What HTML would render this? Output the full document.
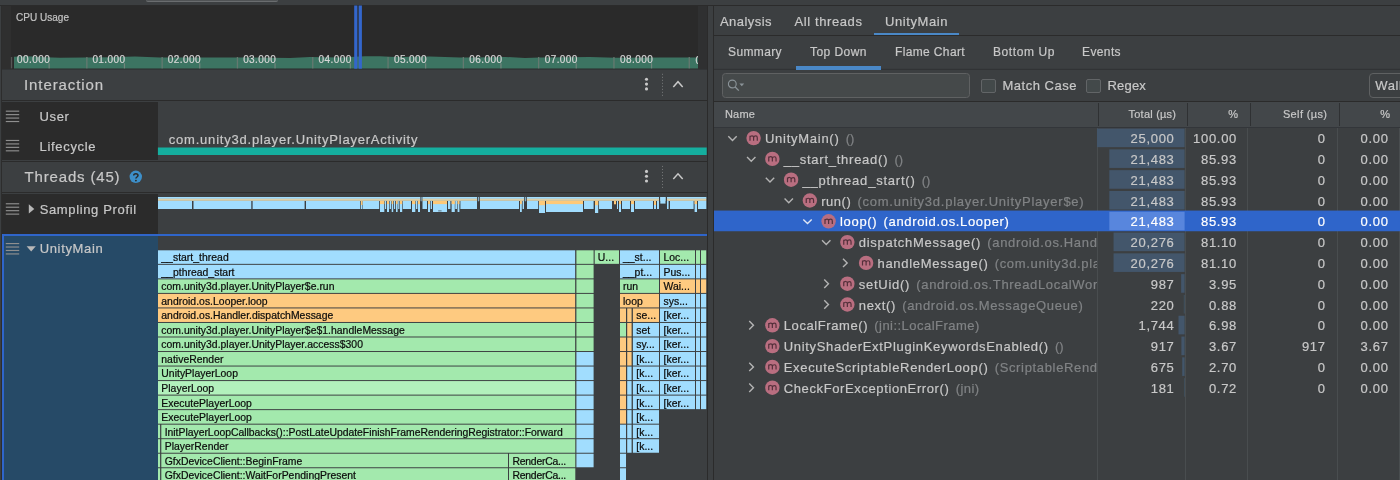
<!DOCTYPE html>
<html lang="en"><head><meta charset="utf-8"><title>CPU Profiler</title>
<style>
html,body{margin:0;padding:0;background:#3c3f41}
body{width:1400px;height:480px;position:relative;overflow:hidden;font-family:"Liberation Sans",sans-serif}
.r{position:absolute;display:block}
.t{position:absolute;white-space:nowrap;display:block;-webkit-text-stroke:0.2px}
svg{overflow:hidden}
#app{position:absolute;left:0;top:0;width:1400px;height:480px;overflow:hidden;will-change:transform}
</style></head><body><div id="app">
<div class="r" style="left:0px;top:0px;width:1400px;height:480px;background:#3c3f41;"></div>
<div class="r" style="left:1px;top:5px;width:1px;height:475px;background:#2d2d2d;"></div>
<div class="r" style="left:0px;top:5px;width:1400px;height:1px;background:#2b2b2b;"></div>
<div class="r" style="left:146px;top:0px;width:132px;height:1px;background:#505355;border-radius:0 0 3px 3px;border-bottom:1px solid #6a6d6f"></div>
<div class="r" style="left:2px;top:6px;width:696px;height:63px;background:#2a2a2a;"></div>
<div class="r" style="left:2px;top:6px;width:9px;height:63px;background:#2f2f2f;"></div>
<div class="r" style="left:698px;top:6px;width:9px;height:63px;background:#2f3031;"></div>
<span class="t" style="left:16.00px;top:10.84px;font-size:10px;line-height:13px;color:#c4c4c4;letter-spacing:0.022px;">CPU Usage</span>
<svg class="r" style="left:0;top:0" width="707" height="70" viewBox="0 0 707 70"><path d="M14,68.5 L14,56.7 L28,56.2 L45,57.2 L60,57.8 L85,57.5 L110,57.2 L135,56.5 L160,57.5 L215,57.6 L240,57.4 L290,57.9 L310,56.9 L340,57.4 L365,56.3 L380,56.2 L395,56.9 L430,56.6 L460,57.4 L470,57.4 L505,56.9 L525,57.9 L540,57.4 L590,56.9 L615,57.7 L660,57.4 L698,57.4 L698,68.5 Z" fill="#3c7462"/><rect x="10.90" y="57" width="1.3" height="11.4" fill="#565656"/><rect x="48.55" y="63.2" width="1.2" height="5.2" fill="#72857d"/><rect x="86.20" y="57" width="1.3" height="11.4" fill="#657970"/><rect x="123.85" y="63.2" width="1.2" height="5.2" fill="#72857d"/><rect x="161.50" y="57" width="1.3" height="11.4" fill="#657970"/><rect x="199.15" y="63.2" width="1.2" height="5.2" fill="#72857d"/><rect x="236.80" y="57" width="1.3" height="11.4" fill="#657970"/><rect x="274.45" y="63.2" width="1.2" height="5.2" fill="#72857d"/><rect x="312.10" y="57" width="1.3" height="11.4" fill="#657970"/><rect x="349.75" y="63.2" width="1.2" height="5.2" fill="#72857d"/><rect x="387.40" y="57" width="1.3" height="11.4" fill="#657970"/><rect x="425.05" y="63.2" width="1.2" height="5.2" fill="#72857d"/><rect x="462.70" y="57" width="1.3" height="11.4" fill="#657970"/><rect x="500.35" y="63.2" width="1.2" height="5.2" fill="#72857d"/><rect x="538.00" y="57" width="1.3" height="11.4" fill="#657970"/><rect x="575.65" y="63.2" width="1.2" height="5.2" fill="#72857d"/><rect x="613.30" y="57" width="1.3" height="11.4" fill="#657970"/><rect x="650.95" y="63.2" width="1.2" height="5.2" fill="#72857d"/><rect x="688.60" y="57" width="1.3" height="11.4" fill="#657970"/><rect x="354.2" y="5.5" width="2.9" height="63.2" fill="#3366cc"/><rect x="357.1" y="5.5" width="1.8" height="63.2" fill="#3366cc" fill-opacity="0.33"/><rect x="358.9" y="5.5" width="3.0" height="63.2" fill="#3366cc"/></svg>
<span class="t" style="left:17.00px;top:53.33px;font-size:10px;line-height:13px;color:#d6d6d6;letter-spacing:0.436px;">00.000</span>
<span class="t" style="left:92.38px;top:53.33px;font-size:10px;line-height:13px;color:#d6d6d6;letter-spacing:0.436px;">01.000</span>
<span class="t" style="left:167.76px;top:53.33px;font-size:10px;line-height:13px;color:#d6d6d6;letter-spacing:0.436px;">02.000</span>
<span class="t" style="left:243.14px;top:53.33px;font-size:10px;line-height:13px;color:#d6d6d6;letter-spacing:0.436px;">03.000</span>
<span class="t" style="left:318.52px;top:53.33px;font-size:10px;line-height:13px;color:#d6d6d6;letter-spacing:0.436px;">04.000</span>
<span class="t" style="left:393.90px;top:53.33px;font-size:10px;line-height:13px;color:#d6d6d6;letter-spacing:0.436px;">05.000</span>
<span class="t" style="left:469.28px;top:53.33px;font-size:10px;line-height:13px;color:#d6d6d6;letter-spacing:0.436px;">06.000</span>
<span class="t" style="left:544.66px;top:53.33px;font-size:10px;line-height:13px;color:#d6d6d6;letter-spacing:0.436px;">07.000</span>
<span class="t" style="left:620.04px;top:53.33px;font-size:10px;line-height:13px;color:#d6d6d6;letter-spacing:0.436px;">08.000</span>
<div class="r" style="left:695.4px;top:50px;width:2.6px;height:18px;overflow:hidden"><span class="t" style="left:0.00px;top:3.63px;font-size:10px;line-height:13px;color:#d6d6d6;letter-spacing:0.436px;">09.000</span></div>
<div class="r" style="left:707px;top:6px;width:1px;height:474px;background:#2b2b2b;"></div>
<div class="r" style="left:713px;top:6px;width:1px;height:474px;background:#2b2b2b;"></div>
<div class="r" style="left:2px;top:69px;width:705px;height:1px;background:#323537;"></div>
<span class="t" style="left:24.00px;top:75.10px;font-size:15px;line-height:20px;color:#c8c8c8;letter-spacing:0.905px;">Interaction</span>
<div class="r" style="left:2px;top:100px;width:705px;height:1px;background:#2b2b2b;"></div>
<svg class="r" style="left:0;top:0" width="707" height="200" viewBox="0 0 707 200"><circle cx="646.5" cy="79.3" r="1.55" fill="#c9c9c9"/><circle cx="646.5" cy="84.1" r="1.55" fill="#c9c9c9"/><circle cx="646.5" cy="88.9" r="1.55" fill="#c9c9c9"/><rect x="662" y="73.8" width="1" height="1" fill="#77797b"/><rect x="662" y="76.8" width="1" height="1" fill="#77797b"/><rect x="662" y="79.8" width="1" height="1" fill="#77797b"/><rect x="662" y="82.8" width="1" height="1" fill="#77797b"/><rect x="662" y="85.8" width="1" height="1" fill="#77797b"/><rect x="662" y="88.8" width="1" height="1" fill="#77797b"/><rect x="662" y="91.8" width="1" height="1" fill="#77797b"/><rect x="662" y="94.8" width="1" height="1" fill="#77797b"/><path d="M673.3,86.9 L678,81.7 L682.7,86.9" fill="none" stroke="#c9c9c9" stroke-width="1.5"/><circle cx="646.5" cy="171.4" r="1.55" fill="#c9c9c9"/><circle cx="646.5" cy="176.2" r="1.55" fill="#c9c9c9"/><circle cx="646.5" cy="181.0" r="1.55" fill="#c9c9c9"/><rect x="662" y="165.9" width="1" height="1" fill="#77797b"/><rect x="662" y="168.9" width="1" height="1" fill="#77797b"/><rect x="662" y="171.9" width="1" height="1" fill="#77797b"/><rect x="662" y="174.9" width="1" height="1" fill="#77797b"/><rect x="662" y="177.9" width="1" height="1" fill="#77797b"/><rect x="662" y="180.9" width="1" height="1" fill="#77797b"/><rect x="662" y="183.9" width="1" height="1" fill="#77797b"/><rect x="662" y="186.9" width="1" height="1" fill="#77797b"/><path d="M673.3,179.0 L678,173.8 L682.7,179.0" fill="none" stroke="#c9c9c9" stroke-width="1.5"/></svg>
<div class="r" style="left:2px;top:102px;width:156px;height:58px;background:#2b2b2b;"></div>
<span class="t" style="left:39.60px;top:108.40px;font-size:13px;line-height:17px;color:#c8c8c8;letter-spacing:0.588px;">User</span>
<span class="t" style="left:39.60px;top:137.80px;font-size:13px;line-height:17px;color:#c8c8c8;letter-spacing:0.669px;">Lifecycle</span>
<span class="t" style="left:168.80px;top:131.20px;font-size:13px;line-height:17px;color:#c8c8c8;letter-spacing:0.785px;">com.unity3d.player.UnityPlayerActivity</span>
<svg class="r" style="left:0;top:140px" width="707" height="20" viewBox="0 140 707 20"><rect x="157.9" y="147.5" width="548.8" height="7.5" fill="#15af9f"/></svg>
<div class="r" style="left:2px;top:161px;width:705px;height:1px;background:#2b2b2b;"></div>
<span class="t" style="left:24.60px;top:167.30px;font-size:15px;line-height:20px;color:#c8c8c8;letter-spacing:0.827px;">Threads (45)</span>
<svg class="r" style="left:129px;top:170px" width="14" height="14" viewBox="0 0 14 14"><circle cx="6.8" cy="6.8" r="6.2" fill="#3d8fc9"/><path d="M4.7,5.4 C4.7,3.2 9,3.2 9,5.5 C9,7 6.9,7 6.9,8.6" fill="none" stroke="#2b2b2b" stroke-width="1.5"/><circle cx="6.9" cy="10.6" r="0.95" fill="#2b2b2b"/></svg>
<div class="r" style="left:2px;top:192px;width:705px;height:1px;background:#2b2b2b;"></div>
<div class="r" style="left:2px;top:194px;width:156px;height:40px;background:#2b2b2b;"></div>
<span class="t" style="left:39.70px;top:200.50px;font-size:13px;line-height:17px;color:#c8c8c8;letter-spacing:0.638px;">Sampling Profil</span>
<svg class="r" style="left:0;top:0" width="707" height="220" viewBox="0 0 707 220"><rect x="158.0" y="197" width="262.2" height="1.9" fill="#a1ddfe"/><rect x="158.0" y="198.7" width="262.2" height="2.2" fill="#ddd0a8"/><rect x="422.4" y="197" width="54.6" height="1.9" fill="#a1ddfe"/><rect x="422.4" y="198.7" width="54.6" height="2.2" fill="#ddd0a8"/><rect x="479.8" y="197" width="44.3" height="1.9" fill="#a1ddfe"/><rect x="479.8" y="198.7" width="44.3" height="2.2" fill="#ddd0a8"/><rect x="526.8" y="197" width="132.2" height="1.9" fill="#a1ddfe"/><rect x="526.8" y="198.7" width="132.2" height="2.2" fill="#ddd0a8"/><rect x="660.3" y="197" width="5.2" height="1.9" fill="#a1ddfe"/><rect x="660.3" y="198.7" width="5.2" height="2.2" fill="#ddd0a8"/><rect x="667.0" y="197" width="39.3" height="1.9" fill="#a1ddfe"/><rect x="667.0" y="198.7" width="39.3" height="2.2" fill="#ddd0a8"/><rect x="158" y="200.85" width="34.0" height="8.15" fill="#a1ddfe"/><rect x="193.5" y="200.85" width="57.8" height="8.15" fill="#a1ddfe"/><rect x="252.6" y="200.85" width="52.0" height="8.15" fill="#a1ddfe"/><rect x="306" y="200.85" width="54.3" height="8.15" fill="#a1ddfe"/><rect x="361" y="200.85" width="1.5" height="8.15" fill="#a1ddfe"/><rect x="361" y="200.7" width="1.5" height="4.3" fill="#fec978"/><rect x="363" y="200.85" width="16.2" height="8.15" fill="#a1ddfe"/><rect x="380" y="200.85" width="4.3" height="11.15" fill="#a1ddfe"/><rect x="380" y="200.7" width="4.3" height="3.4" fill="#fec978"/><rect x="385" y="200.85" width="1.2" height="8.15" fill="#a1ddfe"/><rect x="387" y="200.85" width="2.0" height="11.15" fill="#a1ddfe"/><rect x="387" y="200.7" width="2.0" height="3.4" fill="#fec978"/><rect x="389.6" y="200.85" width="1.4" height="8.15" fill="#a1ddfe"/><rect x="391.7" y="200.85" width="1.5" height="11.15" fill="#a1ddfe"/><rect x="391.7" y="200.7" width="1.5" height="3.4" fill="#fec978"/><rect x="394" y="200.85" width="1.2" height="8.15" fill="#a1ddfe"/><rect x="396" y="200.85" width="1.6" height="11.15" fill="#a1ddfe"/><rect x="396" y="200.7" width="1.6" height="3.4" fill="#fec978"/><rect x="398.2" y="200.85" width="1.2" height="8.15" fill="#a1ddfe"/><rect x="400" y="200.85" width="2.2" height="11.15" fill="#a1ddfe"/><rect x="400" y="200.7" width="2.2" height="3.4" fill="#fec978"/><rect x="402.8" y="200.85" width="8.2" height="8.15" fill="#a1ddfe"/><rect x="412" y="200.85" width="3.3" height="11.15" fill="#a1ddfe"/><rect x="412" y="200.7" width="3.3" height="3.4" fill="#fec978"/><rect x="416" y="200.85" width="1.4" height="8.15" fill="#a1ddfe"/><rect x="418" y="200.85" width="2.0" height="11.15" fill="#a1ddfe"/><rect x="418" y="200.7" width="2.0" height="3.4" fill="#fec978"/><rect x="420.8" y="197" width="0.7" height="4.3" fill="#a1ddfe"/><rect x="422.5" y="200.85" width="4.5" height="8.15" fill="#a1ddfe"/><rect x="428" y="200.85" width="2.0" height="11.15" fill="#a1ddfe"/><rect x="428" y="200.7" width="2.0" height="3.4" fill="#fec978"/><rect x="430.6" y="200.85" width="1.4" height="8.15" fill="#a1ddfe"/><rect x="433" y="200.85" width="14.0" height="11.15" fill="#a1ddfe"/><rect x="433" y="200.7" width="14.0" height="3.4" fill="#fec978"/><rect x="448" y="200.85" width="2.4" height="8.15" fill="#a1ddfe"/><rect x="451.6" y="200.85" width="3.2" height="11.15" fill="#a1ddfe"/><rect x="451.6" y="200.7" width="3.2" height="3.4" fill="#fec978"/><rect x="455.3" y="200.85" width="1.7" height="8.15" fill="#a1ddfe"/><rect x="457.6" y="200.85" width="1.8" height="11.15" fill="#a1ddfe"/><rect x="457.6" y="200.7" width="1.8" height="3.4" fill="#fec978"/><rect x="460.4" y="200.85" width="16.6" height="8.15" fill="#a1ddfe"/><rect x="477.9" y="197" width="0.8" height="4.3" fill="#a1ddfe"/><rect x="480" y="200.85" width="39.0" height="8.15" fill="#a1ddfe"/><rect x="520" y="200.85" width="1.8" height="11.15" fill="#a1ddfe"/><rect x="520" y="200.7" width="1.8" height="3.4" fill="#fec978"/><rect x="522.6" y="200.85" width="1.4" height="8.15" fill="#a1ddfe"/><rect x="524.9" y="197" width="0.8" height="4.3" fill="#a1ddfe"/><rect x="527" y="200.85" width="11.2" height="8.15" fill="#a1ddfe"/><rect x="539" y="200.85" width="6.0" height="12.15" fill="#a1ddfe"/><rect x="539" y="200.7" width="6.0" height="4.5" fill="#fec978"/><rect x="546" y="200.85" width="37.0" height="11.15" fill="#a1ddfe"/><rect x="546" y="200.7" width="37.0" height="3.4" fill="#fec978"/><rect x="584" y="200.85" width="9.6" height="8.15" fill="#a1ddfe"/><rect x="595" y="200.85" width="3.2" height="12.15" fill="#a1ddfe"/><rect x="595" y="200.7" width="3.2" height="4.5" fill="#fec978"/><rect x="599" y="200.85" width="13.0" height="8.15" fill="#a1ddfe"/><rect x="614" y="200.7" width="2.0" height="3.6" fill="#fec978"/><rect x="617" y="200.85" width="1.0" height="8.15" fill="#a1ddfe"/><rect x="619" y="200.85" width="2.0" height="11.15" fill="#a1ddfe"/><rect x="619" y="200.7" width="2.0" height="3.4" fill="#fec978"/><rect x="622" y="200.85" width="8.0" height="8.15" fill="#a1ddfe"/><rect x="631" y="200.85" width="3.0" height="11.15" fill="#a1ddfe"/><rect x="631" y="200.7" width="3.0" height="3.4" fill="#fec978"/><rect x="635" y="200.85" width="18.0" height="8.15" fill="#a1ddfe"/><rect x="654" y="200.85" width="2.0" height="8.15" fill="#a1ddfe"/><rect x="654" y="200.7" width="2.0" height="4.3" fill="#fec978"/><rect x="657" y="200.85" width="2.0" height="8.15" fill="#a1ddfe"/><rect x="660.3" y="197" width="5.2" height="6.6" fill="#a1ddfe"/><rect x="667" y="200.85" width="1.6" height="8.15" fill="#a1ddfe"/><rect x="670" y="200.85" width="23.6" height="8.15" fill="#a1ddfe"/><rect x="694.6" y="200.85" width="2.4" height="11.15" fill="#a1ddfe"/><rect x="694.6" y="200.7" width="2.4" height="3.4" fill="#fec978"/><rect x="698" y="200.85" width="8.3" height="8.15" fill="#a1ddfe"/><rect x="438.2" y="210.2" width="3.4" height="1.3" fill="#6f8a99"/></svg>
<div class="r" style="left:2px;top:234px;width:705px;height:2px;background:#2f65ca;"></div>
<div class="r" style="left:2px;top:236px;width:2px;height:244px;background:#2f65ca;"></div>
<div class="r" style="left:4px;top:236px;width:154px;height:244px;background:#264a67;"></div>
<span class="t" style="left:39.70px;top:240.20px;font-size:13px;line-height:17px;color:#c8c8c8;letter-spacing:0.645px;">UnityMain</span>
<svg class="r" style="left:0;top:0" width="160" height="480" viewBox="0 0 160 480"><rect x="5.8" y="110.60" width="13.4" height="1.15" fill="#8f8f8f"/><rect x="5.8" y="114.05" width="13.4" height="1.15" fill="#8f8f8f"/><rect x="5.8" y="117.50" width="13.4" height="1.15" fill="#8f8f8f"/><rect x="5.8" y="120.95" width="13.4" height="1.15" fill="#8f8f8f"/><rect x="5.8" y="139.90" width="13.4" height="1.15" fill="#8f8f8f"/><rect x="5.8" y="143.35" width="13.4" height="1.15" fill="#8f8f8f"/><rect x="5.8" y="146.80" width="13.4" height="1.15" fill="#8f8f8f"/><rect x="5.8" y="150.25" width="13.4" height="1.15" fill="#8f8f8f"/><rect x="5.8" y="203.20" width="13.4" height="1.15" fill="#8f8f8f"/><rect x="5.8" y="206.65" width="13.4" height="1.15" fill="#8f8f8f"/><rect x="5.8" y="210.10" width="13.4" height="1.15" fill="#8f8f8f"/><rect x="5.8" y="213.55" width="13.4" height="1.15" fill="#8f8f8f"/><rect x="5.8" y="243.00" width="13.4" height="1.15" fill="#8f8f8f"/><rect x="5.8" y="246.45" width="13.4" height="1.15" fill="#8f8f8f"/><rect x="5.8" y="249.90" width="13.4" height="1.15" fill="#8f8f8f"/><rect x="5.8" y="253.35" width="13.4" height="1.15" fill="#8f8f8f"/><path d="M28.8,204.2 L34.3,208.9 L28.8,213.6 Z" fill="#b8b8b8"/><path d="M26.6,246.3 L35.8,246.3 L31.2,251.4 Z" fill="#b8b8b8"/></svg>
<svg class="r" style="left:0;top:0" width="707" height="480" viewBox="0 0 707 480"><rect x="158" y="250.30" width="417.15" height="13.55" fill="#a1ddfe"/><rect x="158" y="264.83" width="417.15" height="13.55" fill="#a1ddfe"/><rect x="158" y="279.36" width="417.15" height="13.55" fill="#a3e9ad"/><rect x="158" y="293.89" width="417.15" height="13.55" fill="#feca80"/><rect x="158" y="308.42" width="417.15" height="13.55" fill="#feca80"/><rect x="158" y="322.95" width="417.15" height="13.55" fill="#a3e9ad"/><rect x="158" y="337.48" width="417.15" height="13.55" fill="#a3e9ad"/><rect x="158" y="352.01" width="417.15" height="13.55" fill="#a3e9ad"/><rect x="158" y="366.54" width="417.15" height="13.55" fill="#a3e9ad"/><rect x="158" y="381.07" width="417.15" height="13.55" fill="#b2f1bc"/><rect x="158" y="395.60" width="417.15" height="13.55" fill="#a3e9ad"/><rect x="158" y="410.13" width="417.15" height="13.55" fill="#a3e9ad"/><rect x="158" y="424.66" width="2.10" height="13.55" fill="#a3e9ad"/><rect x="158" y="439.19" width="2.10" height="13.55" fill="#a3e9ad"/><rect x="158" y="453.72" width="2.10" height="13.55" fill="#a3e9ad"/><rect x="158" y="468.25" width="2.10" height="13.55" fill="#a3e9ad"/><rect x="161.3" y="424.66" width="414.00" height="13.55" fill="#a3e9ad"/><rect x="161.3" y="439.19" width="414.00" height="13.55" fill="#a3e9ad"/><rect x="161.3" y="453.72" width="346.70" height="13.55" fill="#a3e9ad"/><rect x="509" y="453.72" width="66.30" height="13.55" fill="#a3e9ad"/><rect x="161.3" y="468.25" width="346.70" height="13.55" fill="#a3e9ad"/><rect x="509" y="468.25" width="66.30" height="13.55" fill="#a3e9ad"/><rect x="576.4" y="250.30" width="17.20" height="13.55" fill="#a3e9ad"/><rect x="576.4" y="264.83" width="17.20" height="13.55" fill="#a3e9ad"/><rect x="576.4" y="279.36" width="17.20" height="13.55" fill="#a3e9ad"/><rect x="576.4" y="293.89" width="17.20" height="13.55" fill="#a3e9ad"/><rect x="576.4" y="308.42" width="17.20" height="13.55" fill="#a3e9ad"/><rect x="576.4" y="322.95" width="17.20" height="13.55" fill="#a3e9ad"/><rect x="576.4" y="337.48" width="17.20" height="13.55" fill="#a3e9ad"/><rect x="576.4" y="352.01" width="17.20" height="13.55" fill="#a1ddfe"/><rect x="576.4" y="366.54" width="17.20" height="13.55" fill="#a1ddfe"/><rect x="576.4" y="381.07" width="17.20" height="13.55" fill="#a1ddfe"/><rect x="576.4" y="395.60" width="17.20" height="13.55" fill="#a1ddfe"/><rect x="576.4" y="410.13" width="17.20" height="13.55" fill="#a1ddfe"/><rect x="576.4" y="424.66" width="17.20" height="13.55" fill="#a1ddfe"/><rect x="576.4" y="439.19" width="17.20" height="13.55" fill="#a1ddfe"/><rect x="576.4" y="453.72" width="17.20" height="13.55" fill="#a1ddfe"/><rect x="594.7" y="250.30" width="24.30" height="13.55" fill="#a3e9ad"/><rect x="620" y="250.30" width="39.00" height="13.55" fill="#a1ddfe"/><rect x="620" y="264.83" width="39.00" height="13.55" fill="#a1ddfe"/><rect x="620" y="279.36" width="39.00" height="13.55" fill="#a3e9ad"/><rect x="620" y="293.89" width="39.00" height="13.55" fill="#feca80"/><rect x="620" y="308.42" width="6.00" height="13.55" fill="#feca80"/><rect x="620" y="322.95" width="6.00" height="13.55" fill="#a3e9ad"/><rect x="620" y="337.48" width="6.00" height="13.55" fill="#feca80"/><rect x="620" y="352.01" width="6.00" height="13.55" fill="#feca80"/><rect x="620" y="366.54" width="6.00" height="13.55" fill="#feca80"/><rect x="620" y="381.07" width="6.00" height="13.55" fill="#feca80"/><rect x="620" y="395.60" width="6.00" height="13.55" fill="#feca80"/><rect x="620" y="410.13" width="6.00" height="13.55" fill="#feca80"/><rect x="620" y="424.66" width="6.00" height="13.55" fill="#a1ddfe"/><rect x="620" y="439.19" width="6.00" height="13.55" fill="#a1ddfe"/><rect x="620" y="453.72" width="6.00" height="13.55" fill="#a1ddfe"/><rect x="620" y="468.25" width="6.00" height="13.55" fill="#a1ddfe"/><rect x="627.2" y="308.42" width="4.40" height="13.55" fill="#feca80"/><rect x="627.2" y="322.95" width="4.40" height="13.55" fill="#feca80"/><rect x="627.2" y="337.48" width="4.40" height="13.55" fill="#feca80"/><rect x="627.2" y="352.01" width="4.40" height="13.55" fill="#feca80"/><rect x="627.2" y="366.54" width="4.40" height="13.55" fill="#a1ddfe"/><rect x="627.2" y="381.07" width="4.40" height="13.55" fill="#a1ddfe"/><rect x="627.2" y="395.60" width="4.40" height="13.55" fill="#a1ddfe"/><rect x="627.2" y="410.13" width="4.40" height="13.55" fill="#a1ddfe"/><rect x="627.2" y="424.66" width="4.40" height="13.55" fill="#a1ddfe"/><rect x="627.2" y="439.19" width="4.40" height="13.55" fill="#a1ddfe"/><rect x="632.9" y="308.42" width="26.10" height="13.55" fill="#feca80"/><rect x="632.9" y="322.95" width="26.10" height="13.55" fill="#a1ddfe"/><rect x="632.9" y="337.48" width="26.10" height="13.55" fill="#a1ddfe"/><rect x="632.9" y="352.01" width="26.10" height="13.55" fill="#a1ddfe"/><rect x="632.9" y="366.54" width="26.10" height="13.55" fill="#a1ddfe"/><rect x="632.9" y="381.07" width="26.10" height="13.55" fill="#a1ddfe"/><rect x="632.9" y="395.60" width="26.10" height="13.55" fill="#a1ddfe"/><rect x="632.9" y="410.13" width="26.10" height="13.55" fill="#a1ddfe"/><rect x="632.9" y="424.66" width="26.10" height="13.55" fill="#a1ddfe"/><rect x="632.9" y="439.19" width="26.10" height="13.55" fill="#a1ddfe"/><rect x="660" y="250.30" width="35.00" height="13.55" fill="#a3e9ad"/><rect x="696" y="250.30" width="4.00" height="13.55" fill="#a3e9ad"/><rect x="701" y="250.30" width="5.20" height="13.55" fill="#a3e9ad"/><rect x="660" y="264.83" width="35.00" height="13.55" fill="#a1ddfe"/><rect x="696" y="264.83" width="4.00" height="13.55" fill="#a1ddfe"/><rect x="701" y="264.83" width="5.20" height="13.55" fill="#a1ddfe"/><rect x="660" y="279.36" width="35.00" height="13.55" fill="#feca80"/><rect x="696" y="279.36" width="4.00" height="13.55" fill="#feca80"/><rect x="701" y="279.36" width="5.20" height="13.55" fill="#feca80"/><rect x="660" y="293.89" width="35.00" height="13.55" fill="#a1ddfe"/><rect x="696" y="293.89" width="4.00" height="13.55" fill="#a1ddfe"/><rect x="701" y="293.89" width="5.20" height="13.55" fill="#a1ddfe"/><rect x="660" y="308.42" width="35.00" height="13.55" fill="#a1ddfe"/><rect x="696" y="308.42" width="4.00" height="13.55" fill="#a1ddfe"/><rect x="701" y="308.42" width="5.20" height="13.55" fill="#a1ddfe"/><rect x="660" y="322.95" width="35.00" height="13.55" fill="#a1ddfe"/><rect x="696" y="322.95" width="4.00" height="13.55" fill="#a1ddfe"/><rect x="701" y="322.95" width="5.20" height="13.55" fill="#a1ddfe"/><rect x="660" y="337.48" width="35.00" height="13.55" fill="#a1ddfe"/><rect x="696" y="337.48" width="4.00" height="13.55" fill="#a1ddfe"/><rect x="701" y="337.48" width="5.20" height="13.55" fill="#a1ddfe"/><rect x="660" y="352.01" width="35.00" height="13.55" fill="#a1ddfe"/><rect x="696" y="352.01" width="4.00" height="13.55" fill="#a1ddfe"/><rect x="701" y="352.01" width="5.20" height="13.55" fill="#a1ddfe"/><rect x="660" y="366.54" width="35.00" height="13.55" fill="#a1ddfe"/><rect x="696" y="366.54" width="4.00" height="13.55" fill="#a1ddfe"/><rect x="701" y="366.54" width="5.20" height="13.55" fill="#a1ddfe"/><rect x="660" y="381.07" width="35.00" height="13.55" fill="#a1ddfe"/><rect x="696" y="381.07" width="4.00" height="13.55" fill="#a1ddfe"/><rect x="701" y="381.07" width="5.20" height="13.55" fill="#a1ddfe"/><rect x="660" y="395.60" width="35.00" height="13.55" fill="#a1ddfe"/><rect x="696" y="395.60" width="4.00" height="13.55" fill="#a1ddfe"/><rect x="701" y="395.60" width="5.20" height="13.55" fill="#a1ddfe"/><g font-family="Liberation Sans, sans-serif" font-size="10.4" fill="#0c0c0c" stroke="#0c0c0c" stroke-width="0.22"><text x="161.3" y="261.20" letter-spacing="0.030">__start_thread</text><text x="161.3" y="275.73" letter-spacing="0.030">__pthread_start</text><text x="161.3" y="290.26" letter-spacing="0.030">com.unity3d.player.UnityPlayer$e.run</text><text x="161.3" y="304.79" letter-spacing="0.030">android.os.Looper.loop</text><text x="161.3" y="319.32" letter-spacing="0.030">android.os.Handler.dispatchMessage</text><text x="161.3" y="333.85" letter-spacing="0.030">com.unity3d.player.UnityPlayer$e$1.handleMessage</text><text x="161.3" y="348.38" letter-spacing="0.030">com.unity3d.player.UnityPlayer.access$300</text><text x="161.3" y="362.91" letter-spacing="0.030">nativeRender</text><text x="161.3" y="377.44" letter-spacing="0.030">UnityPlayerLoop</text><text x="161.3" y="391.97" letter-spacing="0.030">PlayerLoop</text><text x="161.3" y="406.50" letter-spacing="0.030">ExecutePlayerLoop</text><text x="161.3" y="421.03" letter-spacing="0.030">ExecutePlayerLoop</text><text x="164.7" y="435.56" letter-spacing="-0.013">InitPlayerLoopCallbacks()::PostLateUpdateFinishFrameRenderingRegistrator::Forward</text><text x="164.7" y="450.09" letter-spacing="0.030">PlayerRender</text><text x="164.7" y="464.62" letter-spacing="0.030">GfxDeviceClient::BeginFrame</text><text x="512.5" y="464.62" letter-spacing="-0.233">RenderCa...</text><text x="164.7" y="479.15" letter-spacing="0.030">GfxDeviceClient::WaitForPendingPresent</text><text x="512.5" y="479.15" letter-spacing="-0.233">RenderCa...</text><text x="597.8" y="261.20" letter-spacing="0.030">U...</text><text x="623" y="261.20" letter-spacing="0.030">__st...</text><text x="623" y="275.73" letter-spacing="0.030">__pt...</text><text x="623" y="290.26" letter-spacing="0.030">run</text><text x="623" y="304.79" letter-spacing="0.030">loop</text><text x="636.3" y="319.32" letter-spacing="0.030">se...</text><text x="636.3" y="333.85" letter-spacing="0.030">set</text><text x="636.3" y="348.38" letter-spacing="0.030">sy...</text><text x="636.3" y="362.91" letter-spacing="0.030">[k...</text><text x="636.3" y="377.44" letter-spacing="0.030">[k...</text><text x="636.3" y="391.97" letter-spacing="0.030">[k...</text><text x="636.3" y="406.50" letter-spacing="0.030">[k...</text><text x="636.3" y="421.03" letter-spacing="0.030">[k...</text><text x="636.3" y="435.56" letter-spacing="0.030">[k...</text><text x="636.3" y="450.09" letter-spacing="0.030">[k...</text><text x="663.5" y="261.20" letter-spacing="0.030">Loc...</text><text x="663.5" y="275.73" letter-spacing="0.030">Pus...</text><text x="663.5" y="290.26" letter-spacing="0.030">Wai...</text><text x="663.5" y="304.79" letter-spacing="0.030">sys...</text><text x="663.5" y="319.32" letter-spacing="0.030">[ker...</text><text x="663.5" y="333.85" letter-spacing="0.030">[ker...</text><text x="663.5" y="348.38" letter-spacing="0.030">[ker...</text><text x="663.5" y="362.91" letter-spacing="0.030">[ker...</text><text x="663.5" y="377.44" letter-spacing="0.030">[ker...</text><text x="663.5" y="391.97" letter-spacing="0.030">[ker...</text><text x="663.5" y="406.50" letter-spacing="0.030">[ker...</text></g></svg>
<div class="r" style="left:714px;top:35px;width:686px;height:1px;background:#2b2b2b;"></div>
<span class="t" style="left:720.00px;top:12.60px;font-size:13px;line-height:17px;color:#c8c8c8;letter-spacing:0.449px;">Analysis</span>
<span class="t" style="left:794.50px;top:12.60px;font-size:13px;line-height:17px;color:#c8c8c8;letter-spacing:0.598px;">All threads</span>
<span class="t" style="left:885.00px;top:12.60px;font-size:13px;line-height:17px;color:#c8c8c8;letter-spacing:0.578px;">UnityMain</span>
<div class="r" style="left:874px;top:33px;width:85px;height:2.4px;background:#4a88c7;"></div>
<span class="t" style="left:728.00px;top:43.64px;font-size:12px;line-height:16px;color:#c8c8c8;letter-spacing:0.380px;">Summary</span>
<span class="t" style="left:810.00px;top:43.64px;font-size:12px;line-height:16px;color:#c8c8c8;letter-spacing:0.455px;">Top Down</span>
<span class="t" style="left:895.00px;top:43.64px;font-size:12px;line-height:16px;color:#c8c8c8;letter-spacing:0.362px;">Flame Chart</span>
<span class="t" style="left:993.00px;top:43.64px;font-size:12px;line-height:16px;color:#c8c8c8;letter-spacing:0.590px;">Bottom Up</span>
<span class="t" style="left:1082.00px;top:43.64px;font-size:12px;line-height:16px;color:#c8c8c8;letter-spacing:0.386px;">Events</span>
<div class="r" style="left:714px;top:68px;width:686px;height:1px;background:#393c3e;"></div>
<div class="r" style="left:714px;top:69px;width:686px;height:1px;background:#313335;"></div>
<div class="r" style="left:796px;top:66px;width:85px;height:4px;background:#4a88c7;"></div>
<div class="r" style="left:721.5px;top:73px;width:246px;height:23px;border:1px solid #5f6162;border-radius:3.5px;background:#45494a"></div>
<svg class="r" style="left:724px;top:76px" width="24" height="18" viewBox="0 0 24 18"><circle cx="8.3" cy="8" r="3.9" fill="none" stroke="#8b9499" stroke-width="1.1"/><path d="M11.2,11 L14.8,14.6" stroke="#8b9499" stroke-width="1.3" fill="none"/><path d="M15.4,7.5 L20.2,7.5 L17.8,10.3 Z" fill="#8b9499"/></svg>
<div class="r" style="left:981px;top:78.5px;width:12.5px;height:12.5px;border:1px solid #626567;border-radius:2px;background:#43494a"></div>
<div class="r" style="left:1086px;top:78.5px;width:12.5px;height:12.5px;border:1px solid #626567;border-radius:2px;background:#43494a"></div>
<span class="t" style="left:1002.50px;top:77.00px;font-size:13px;line-height:17px;color:#c8c8c8;letter-spacing:0.514px;">Match Case</span>
<span class="t" style="left:1107.50px;top:77.00px;font-size:13px;line-height:17px;color:#c8c8c8;letter-spacing:0.184px;">Regex</span>
<div class="r" style="left:1368.5px;top:73px;width:40px;height:23px;border:1px solid #5f6162;border-radius:4px;background:#3c3f41"></div>
<span class="t" style="left:1375.30px;top:77.00px;font-size:13px;line-height:17px;color:#c8c8c8;letter-spacing:0.600px;">Wall Clock</span>
<div class="r" style="left:714px;top:101px;width:686px;height:1px;background:#2b2b2b;"></div>
<div class="r" style="left:714px;top:102px;width:686px;height:25px;background:#43474a;"></div>
<div class="r" style="left:714px;top:127px;width:686px;height:1px;background:#33363a;"></div>
<div class="r" style="left:1097.5px;top:103px;width:1px;height:23px;background:#2f3133;"></div>
<div class="r" style="left:1187px;top:103px;width:1px;height:23px;background:#2f3133;"></div>
<div class="r" style="left:1249.5px;top:103px;width:1px;height:23px;background:#2f3133;"></div>
<div class="r" style="left:1338.7px;top:103px;width:1px;height:23px;background:#2f3133;"></div>
<span class="t" style="left:725.00px;top:107.19px;font-size:11px;line-height:14px;color:#c8c8c8;letter-spacing:0.164px;">Name</span>
<span class="t" style="right:223.78px;top:107.19px;font-size:11px;line-height:14px;color:#c8c8c8;letter-spacing:0.224px;">Total (µs)</span>
<span class="t" style="right:162.00px;top:107.19px;font-size:11px;line-height:14px;color:#c8c8c8;letter-spacing:0.000px;">%</span>
<span class="t" style="right:72.63px;top:107.19px;font-size:11px;line-height:14px;color:#c8c8c8;letter-spacing:0.369px;">Self (µs)</span>
<span class="t" style="right:10.00px;top:107.19px;font-size:11px;line-height:14px;color:#c8c8c8;letter-spacing:0.000px;">%</span>
<div class="r" style="left:1096.6px;top:128px;width:1px;height:352px;background:#494d4f;"></div>
<div class="r" style="left:1185.2px;top:128px;width:1px;height:352px;background:#494d4f;"></div>
<div class="r" style="left:1247.3px;top:128px;width:1px;height:352px;background:#494d4f;"></div>
<div class="r" style="left:1337px;top:128px;width:1px;height:352px;background:#494d4f;"></div>
<div class="r" style="left:1399px;top:128px;width:1px;height:352px;background:#494d4f;"></div>
<svg class="r" style="left:0;top:0" width="1400" height="480" viewBox="0 0 1400 480"><rect x="1097.00" y="128.55" width="87.60" height="18.6" fill="#43566b"/><rect x="1109.33" y="149.35" width="75.27" height="18.6" fill="#43566b"/><rect x="1109.33" y="170.15" width="75.27" height="18.6" fill="#43566b"/><rect x="1109.33" y="190.95" width="75.27" height="18.6" fill="#43566b"/><rect x="714" y="210.55" width="686" height="20.70" fill="#2f65ca"/><rect x="1109.33" y="211.75" width="75.27" height="18.6" fill="#5886dd"/><rect x="1113.56" y="232.55" width="71.04" height="18.6" fill="#43566b"/><rect x="1113.56" y="253.35" width="71.04" height="18.6" fill="#43566b"/><rect x="1181.14" y="274.15" width="3.46" height="18.6" fill="#43566b"/><rect x="1183.83" y="294.95" width="0.77" height="18.6" fill="#43566b"/><rect x="1178.49" y="315.75" width="6.11" height="18.6" fill="#43566b"/><rect x="1181.39" y="336.55" width="3.21" height="18.6" fill="#43566b"/><rect x="1182.23" y="357.35" width="2.37" height="18.6" fill="#43566b"/><rect x="1183.97" y="378.15" width="0.63" height="18.6" fill="#43566b"/></svg>
<div class="r" style="left:714px;top:127px;width:383px;height:22px;overflow:hidden"><span class="t" style="left:51.00px;top:3.15px;font-size:13px;line-height:17px;color:#c8c8c8;letter-spacing:0.731px;">UnityMain()</span><span class="t" style="left:131.70px;top:3.15px;font-size:13px;line-height:17px;color:#808385;letter-spacing:-0.029px;">()</span></div>
<span class="t" style="right:225.50px;top:130.15px;font-size:13px;line-height:17px;color:#c8c8c8;letter-spacing:0.700px;">25,000</span>
<span class="t" style="right:163.00px;top:130.15px;font-size:13px;line-height:17px;color:#c8c8c8;letter-spacing:0.700px;">100.00</span>
<span class="t" style="right:74.30px;top:130.15px;font-size:13px;line-height:17px;color:#c8c8c8;letter-spacing:0.700px;">0</span>
<span class="t" style="right:11.30px;top:130.15px;font-size:13px;line-height:17px;color:#c8c8c8;letter-spacing:0.700px;">0.00</span>
<div class="r" style="left:714px;top:148px;width:383px;height:22px;overflow:hidden"><span class="t" style="left:69.75px;top:2.95px;font-size:13px;line-height:17px;color:#c8c8c8;letter-spacing:0.750px;">__start_thread()</span><span class="t" style="left:180.45px;top:2.95px;font-size:13px;line-height:17px;color:#808385;letter-spacing:-0.029px;">()</span></div>
<span class="t" style="right:225.50px;top:150.95px;font-size:13px;line-height:17px;color:#c8c8c8;letter-spacing:0.700px;">21,483</span>
<span class="t" style="right:163.00px;top:150.95px;font-size:13px;line-height:17px;color:#c8c8c8;letter-spacing:0.700px;">85.93</span>
<span class="t" style="right:74.30px;top:150.95px;font-size:13px;line-height:17px;color:#c8c8c8;letter-spacing:0.700px;">0</span>
<span class="t" style="right:11.30px;top:150.95px;font-size:13px;line-height:17px;color:#c8c8c8;letter-spacing:0.700px;">0.00</span>
<div class="r" style="left:714px;top:169px;width:383px;height:22px;overflow:hidden"><span class="t" style="left:88.50px;top:2.75px;font-size:13px;line-height:17px;color:#c8c8c8;letter-spacing:0.787px;">__pthread_start()</span><span class="t" style="left:207.80px;top:2.75px;font-size:13px;line-height:17px;color:#808385;letter-spacing:-0.029px;">()</span></div>
<span class="t" style="right:225.50px;top:171.75px;font-size:13px;line-height:17px;color:#c8c8c8;letter-spacing:0.700px;">21,483</span>
<span class="t" style="right:163.00px;top:171.75px;font-size:13px;line-height:17px;color:#c8c8c8;letter-spacing:0.700px;">85.93</span>
<span class="t" style="right:74.30px;top:171.75px;font-size:13px;line-height:17px;color:#c8c8c8;letter-spacing:0.700px;">0</span>
<span class="t" style="right:11.30px;top:171.75px;font-size:13px;line-height:17px;color:#c8c8c8;letter-spacing:0.700px;">0.00</span>
<div class="r" style="left:714px;top:190px;width:383px;height:22px;overflow:hidden"><span class="t" style="left:107.25px;top:2.55px;font-size:13px;line-height:17px;color:#c8c8c8;letter-spacing:0.510px;">run()</span><span class="t" style="left:143.45px;top:2.55px;font-size:13px;line-height:17px;color:#808385;letter-spacing:0.747px;">(com.unity3d.player.UnityPlayer$e)</span></div>
<span class="t" style="right:225.50px;top:192.55px;font-size:13px;line-height:17px;color:#c8c8c8;letter-spacing:0.700px;">21,483</span>
<span class="t" style="right:163.00px;top:192.55px;font-size:13px;line-height:17px;color:#c8c8c8;letter-spacing:0.700px;">85.93</span>
<span class="t" style="right:74.30px;top:192.55px;font-size:13px;line-height:17px;color:#c8c8c8;letter-spacing:0.700px;">0</span>
<span class="t" style="right:11.30px;top:192.55px;font-size:13px;line-height:17px;color:#c8c8c8;letter-spacing:0.700px;">0.00</span>
<div class="r" style="left:714px;top:210px;width:383px;height:22px;overflow:hidden"><span class="t" style="left:126.00px;top:3.35px;font-size:13px;line-height:17px;color:#ffffff;letter-spacing:0.677px;">loop()</span><span class="t" style="left:169.50px;top:3.35px;font-size:13px;line-height:17px;color:#ffffff;letter-spacing:0.660px;">(android.os.Looper)</span></div>
<span class="t" style="right:225.50px;top:213.35px;font-size:13px;line-height:17px;color:#ffffff;letter-spacing:0.700px;">21,483</span>
<span class="t" style="right:163.00px;top:213.35px;font-size:13px;line-height:17px;color:#ffffff;letter-spacing:0.700px;">85.93</span>
<span class="t" style="right:74.30px;top:213.35px;font-size:13px;line-height:17px;color:#ffffff;letter-spacing:0.700px;">0</span>
<span class="t" style="right:11.30px;top:213.35px;font-size:13px;line-height:17px;color:#ffffff;letter-spacing:0.700px;">0.00</span>
<div class="r" style="left:714px;top:231px;width:383px;height:22px;overflow:hidden"><span class="t" style="left:144.75px;top:3.15px;font-size:13px;line-height:17px;color:#c8c8c8;letter-spacing:0.733px;">dispatchMessage()</span><span class="t" style="left:273.25px;top:3.15px;font-size:13px;line-height:17px;color:#808385;letter-spacing:0.660px;">(android.os.Handler)</span></div>
<span class="t" style="right:225.50px;top:234.15px;font-size:13px;line-height:17px;color:#c8c8c8;letter-spacing:0.700px;">20,276</span>
<span class="t" style="right:163.00px;top:234.15px;font-size:13px;line-height:17px;color:#c8c8c8;letter-spacing:0.700px;">81.10</span>
<span class="t" style="right:74.30px;top:234.15px;font-size:13px;line-height:17px;color:#c8c8c8;letter-spacing:0.700px;">0</span>
<span class="t" style="right:11.30px;top:234.15px;font-size:13px;line-height:17px;color:#c8c8c8;letter-spacing:0.700px;">0.00</span>
<div class="r" style="left:714px;top:252px;width:383px;height:22px;overflow:hidden"><span class="t" style="left:163.50px;top:2.95px;font-size:13px;line-height:17px;color:#c8c8c8;letter-spacing:0.703px;">handleMessage()</span><span class="t" style="left:280.70px;top:2.95px;font-size:13px;line-height:17px;color:#808385;letter-spacing:0.660px;">(com.unity3d.player.UnityPlayer$e$1)</span></div>
<span class="t" style="right:225.50px;top:254.95px;font-size:13px;line-height:17px;color:#c8c8c8;letter-spacing:0.700px;">20,276</span>
<span class="t" style="right:163.00px;top:254.95px;font-size:13px;line-height:17px;color:#c8c8c8;letter-spacing:0.700px;">81.10</span>
<span class="t" style="right:74.30px;top:254.95px;font-size:13px;line-height:17px;color:#c8c8c8;letter-spacing:0.700px;">0</span>
<span class="t" style="right:11.30px;top:254.95px;font-size:13px;line-height:17px;color:#c8c8c8;letter-spacing:0.700px;">0.00</span>
<div class="r" style="left:714px;top:273px;width:383px;height:22px;overflow:hidden"><span class="t" style="left:144.75px;top:2.75px;font-size:13px;line-height:17px;color:#c8c8c8;letter-spacing:0.724px;">setUid()</span><span class="t" style="left:202.25px;top:2.75px;font-size:13px;line-height:17px;color:#808385;letter-spacing:0.660px;">(android.os.ThreadLocalWorkSource)</span></div>
<span class="t" style="right:225.50px;top:275.75px;font-size:13px;line-height:17px;color:#c8c8c8;letter-spacing:0.700px;">987</span>
<span class="t" style="right:163.00px;top:275.75px;font-size:13px;line-height:17px;color:#c8c8c8;letter-spacing:0.700px;">3.95</span>
<span class="t" style="right:74.30px;top:275.75px;font-size:13px;line-height:17px;color:#c8c8c8;letter-spacing:0.700px;">0</span>
<span class="t" style="right:11.30px;top:275.75px;font-size:13px;line-height:17px;color:#c8c8c8;letter-spacing:0.700px;">0.00</span>
<div class="r" style="left:714px;top:294px;width:383px;height:22px;overflow:hidden"><span class="t" style="left:144.75px;top:2.55px;font-size:13px;line-height:17px;color:#c8c8c8;letter-spacing:0.661px;">next()</span><span class="t" style="left:188.15px;top:2.55px;font-size:13px;line-height:17px;color:#808385;letter-spacing:0.660px;">(android.os.MessageQueue)</span></div>
<span class="t" style="right:225.50px;top:296.55px;font-size:13px;line-height:17px;color:#c8c8c8;letter-spacing:0.700px;">220</span>
<span class="t" style="right:163.00px;top:296.55px;font-size:13px;line-height:17px;color:#c8c8c8;letter-spacing:0.700px;">0.88</span>
<span class="t" style="right:74.30px;top:296.55px;font-size:13px;line-height:17px;color:#c8c8c8;letter-spacing:0.700px;">0</span>
<span class="t" style="right:11.30px;top:296.55px;font-size:13px;line-height:17px;color:#c8c8c8;letter-spacing:0.700px;">0.00</span>
<div class="r" style="left:714px;top:314px;width:383px;height:22px;overflow:hidden"><span class="t" style="left:69.75px;top:3.35px;font-size:13px;line-height:17px;color:#c8c8c8;letter-spacing:0.583px;">LocalFrame()</span><span class="t" style="left:160.25px;top:3.35px;font-size:13px;line-height:17px;color:#808385;letter-spacing:0.469px;">(jni::LocalFrame)</span></div>
<span class="t" style="right:225.50px;top:317.35px;font-size:13px;line-height:17px;color:#c8c8c8;letter-spacing:0.700px;">1,744</span>
<span class="t" style="right:163.00px;top:317.35px;font-size:13px;line-height:17px;color:#c8c8c8;letter-spacing:0.700px;">6.98</span>
<span class="t" style="right:74.30px;top:317.35px;font-size:13px;line-height:17px;color:#c8c8c8;letter-spacing:0.700px;">0</span>
<span class="t" style="right:11.30px;top:317.35px;font-size:13px;line-height:17px;color:#c8c8c8;letter-spacing:0.700px;">0.00</span>
<div class="r" style="left:714px;top:335px;width:383px;height:22px;overflow:hidden"><span class="t" style="left:69.75px;top:3.15px;font-size:13px;line-height:17px;color:#c8c8c8;letter-spacing:0.678px;">UnityShaderExtPluginKeywordsEnabled()</span><span class="t" style="left:340.95px;top:3.15px;font-size:13px;line-height:17px;color:#808385;letter-spacing:-0.029px;">()</span></div>
<span class="t" style="right:225.50px;top:338.15px;font-size:13px;line-height:17px;color:#c8c8c8;letter-spacing:0.700px;">917</span>
<span class="t" style="right:163.00px;top:338.15px;font-size:13px;line-height:17px;color:#c8c8c8;letter-spacing:0.700px;">3.67</span>
<span class="t" style="right:74.30px;top:338.15px;font-size:13px;line-height:17px;color:#c8c8c8;letter-spacing:0.700px;">917</span>
<span class="t" style="right:11.30px;top:338.15px;font-size:13px;line-height:17px;color:#c8c8c8;letter-spacing:0.700px;">3.67</span>
<div class="r" style="left:714px;top:356px;width:383px;height:22px;overflow:hidden"><span class="t" style="left:69.75px;top:2.95px;font-size:13px;line-height:17px;color:#c8c8c8;letter-spacing:0.679px;">ExecuteScriptableRenderLoop()</span><span class="t" style="left:280.65px;top:2.95px;font-size:13px;line-height:17px;color:#808385;letter-spacing:0.660px;">(ScriptableRenderContext)</span></div>
<span class="t" style="right:225.50px;top:358.95px;font-size:13px;line-height:17px;color:#c8c8c8;letter-spacing:0.700px;">675</span>
<span class="t" style="right:163.00px;top:358.95px;font-size:13px;line-height:17px;color:#c8c8c8;letter-spacing:0.700px;">2.70</span>
<span class="t" style="right:74.30px;top:358.95px;font-size:13px;line-height:17px;color:#c8c8c8;letter-spacing:0.700px;">0</span>
<span class="t" style="right:11.30px;top:358.95px;font-size:13px;line-height:17px;color:#c8c8c8;letter-spacing:0.700px;">0.00</span>
<div class="r" style="left:714px;top:377px;width:383px;height:22px;overflow:hidden"><span class="t" style="left:69.75px;top:2.75px;font-size:13px;line-height:17px;color:#c8c8c8;letter-spacing:0.613px;">CheckForExceptionError()</span><span class="t" style="left:241.65px;top:2.75px;font-size:13px;line-height:17px;color:#808385;letter-spacing:0.467px;">(jni)</span></div>
<span class="t" style="right:225.50px;top:379.75px;font-size:13px;line-height:17px;color:#c8c8c8;letter-spacing:0.700px;">181</span>
<span class="t" style="right:163.00px;top:379.75px;font-size:13px;line-height:17px;color:#c8c8c8;letter-spacing:0.700px;">0.72</span>
<span class="t" style="right:74.30px;top:379.75px;font-size:13px;line-height:17px;color:#c8c8c8;letter-spacing:0.700px;">0</span>
<span class="t" style="right:11.30px;top:379.75px;font-size:13px;line-height:17px;color:#c8c8c8;letter-spacing:0.700px;">0.00</span>
<svg class="r" style="left:0;top:0" width="1400" height="480" viewBox="0 0 1400 480"><circle cx="753.60" cy="138.10" r="7.2" fill="#b96e80"/><path d="M750.00,140.70 v-4.9 M750.00,137.10 c0.6,-1.6 3.6,-1.8 3.6,0.4 v3.2 M753.60,137.50 c0.6,-2 3.7,-2.2 3.7,0.2 v3" fill="none" stroke="#55303b" stroke-width="1.2"/><path d="M728.30,136.20 L732.50,140.40 L736.70,136.20" fill="none" stroke="#b4b4b4" stroke-width="1.4"/><circle cx="772.35" cy="158.90" r="7.2" fill="#b96e80"/><path d="M768.75,161.50 v-4.9 M768.75,157.90 c0.6,-1.6 3.6,-1.8 3.6,0.4 v3.2 M772.35,158.30 c0.6,-2 3.7,-2.2 3.7,0.2 v3" fill="none" stroke="#55303b" stroke-width="1.2"/><path d="M747.05,157.00 L751.25,161.20 L755.45,157.00" fill="none" stroke="#b4b4b4" stroke-width="1.4"/><circle cx="791.10" cy="179.70" r="7.2" fill="#b96e80"/><path d="M787.50,182.30 v-4.9 M787.50,178.70 c0.6,-1.6 3.6,-1.8 3.6,0.4 v3.2 M791.10,179.10 c0.6,-2 3.7,-2.2 3.7,0.2 v3" fill="none" stroke="#55303b" stroke-width="1.2"/><path d="M765.80,177.80 L770.00,182.00 L774.20,177.80" fill="none" stroke="#b4b4b4" stroke-width="1.4"/><circle cx="809.85" cy="200.50" r="7.2" fill="#b96e80"/><path d="M806.25,203.10 v-4.9 M806.25,199.50 c0.6,-1.6 3.6,-1.8 3.6,0.4 v3.2 M809.85,199.90 c0.6,-2 3.7,-2.2 3.7,0.2 v3" fill="none" stroke="#55303b" stroke-width="1.2"/><path d="M784.55,198.60 L788.75,202.80 L792.95,198.60" fill="none" stroke="#b4b4b4" stroke-width="1.4"/><circle cx="828.60" cy="221.30" r="7.2" fill="#b96e80"/><path d="M825.00,223.90 v-4.9 M825.00,220.30 c0.6,-1.6 3.6,-1.8 3.6,0.4 v3.2 M828.60,220.70 c0.6,-2 3.7,-2.2 3.7,0.2 v3" fill="none" stroke="#55303b" stroke-width="1.2"/><path d="M803.30,219.40 L807.50,223.60 L811.70,219.40" fill="none" stroke="#dfe6f5" stroke-width="1.4"/><circle cx="847.35" cy="242.10" r="7.2" fill="#b96e80"/><path d="M843.75,244.70 v-4.9 M843.75,241.10 c0.6,-1.6 3.6,-1.8 3.6,0.4 v3.2 M847.35,241.50 c0.6,-2 3.7,-2.2 3.7,0.2 v3" fill="none" stroke="#55303b" stroke-width="1.2"/><path d="M822.05,240.20 L826.25,244.40 L830.45,240.20" fill="none" stroke="#b4b4b4" stroke-width="1.4"/><circle cx="866.10" cy="262.90" r="7.2" fill="#b96e80"/><path d="M862.50,265.50 v-4.9 M862.50,261.90 c0.6,-1.6 3.6,-1.8 3.6,0.4 v3.2 M866.10,262.30 c0.6,-2 3.7,-2.2 3.7,0.2 v3" fill="none" stroke="#55303b" stroke-width="1.2"/><path d="M843.00,258.70 L847.20,262.90 L843.00,267.10" fill="none" stroke="#b4b4b4" stroke-width="1.4"/><circle cx="847.35" cy="283.70" r="7.2" fill="#b96e80"/><path d="M843.75,286.30 v-4.9 M843.75,282.70 c0.6,-1.6 3.6,-1.8 3.6,0.4 v3.2 M847.35,283.10 c0.6,-2 3.7,-2.2 3.7,0.2 v3" fill="none" stroke="#55303b" stroke-width="1.2"/><path d="M824.25,279.50 L828.45,283.70 L824.25,287.90" fill="none" stroke="#b4b4b4" stroke-width="1.4"/><circle cx="847.35" cy="304.50" r="7.2" fill="#b96e80"/><path d="M843.75,307.10 v-4.9 M843.75,303.50 c0.6,-1.6 3.6,-1.8 3.6,0.4 v3.2 M847.35,303.90 c0.6,-2 3.7,-2.2 3.7,0.2 v3" fill="none" stroke="#55303b" stroke-width="1.2"/><path d="M824.25,300.30 L828.45,304.50 L824.25,308.70" fill="none" stroke="#b4b4b4" stroke-width="1.4"/><circle cx="772.35" cy="325.30" r="7.2" fill="#b96e80"/><path d="M768.75,327.90 v-4.9 M768.75,324.30 c0.6,-1.6 3.6,-1.8 3.6,0.4 v3.2 M772.35,324.70 c0.6,-2 3.7,-2.2 3.7,0.2 v3" fill="none" stroke="#55303b" stroke-width="1.2"/><path d="M749.25,321.10 L753.45,325.30 L749.25,329.50" fill="none" stroke="#b4b4b4" stroke-width="1.4"/><circle cx="772.35" cy="346.10" r="7.2" fill="#b96e80"/><path d="M768.75,348.70 v-4.9 M768.75,345.10 c0.6,-1.6 3.6,-1.8 3.6,0.4 v3.2 M772.35,345.50 c0.6,-2 3.7,-2.2 3.7,0.2 v3" fill="none" stroke="#55303b" stroke-width="1.2"/><circle cx="772.35" cy="366.90" r="7.2" fill="#b96e80"/><path d="M768.75,369.50 v-4.9 M768.75,365.90 c0.6,-1.6 3.6,-1.8 3.6,0.4 v3.2 M772.35,366.30 c0.6,-2 3.7,-2.2 3.7,0.2 v3" fill="none" stroke="#55303b" stroke-width="1.2"/><path d="M749.25,362.70 L753.45,366.90 L749.25,371.10" fill="none" stroke="#b4b4b4" stroke-width="1.4"/><circle cx="772.35" cy="387.70" r="7.2" fill="#b96e80"/><path d="M768.75,390.30 v-4.9 M768.75,386.70 c0.6,-1.6 3.6,-1.8 3.6,0.4 v3.2 M772.35,387.10 c0.6,-2 3.7,-2.2 3.7,0.2 v3" fill="none" stroke="#55303b" stroke-width="1.2"/><path d="M749.25,383.50 L753.45,387.70 L749.25,391.90" fill="none" stroke="#b4b4b4" stroke-width="1.4"/></svg>
</div></body></html>
